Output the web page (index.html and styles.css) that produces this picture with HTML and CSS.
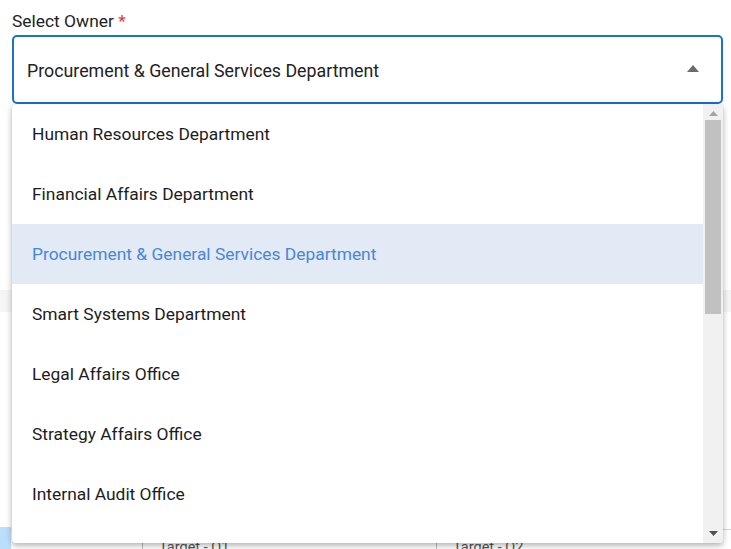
FILE: index.html
```html
<!DOCTYPE html>
<html>
<head>
<meta charset="utf-8">
<link rel="stylesheet" href="styles.css">
</head>
<body>
<div class="page">
  <div class="field">
    <div class="label">Select Owner <span class="req">*</span></div>
    <div class="select">
      <span class="value">Procurement &amp; General Services Department</span>
      <svg class="caret" width="12" height="7" viewBox="0 0 12 7"><path d="M0 7 L6 0 L12 7 Z" fill="#6b6b6b"/></svg>
    </div>
  </div>
  <div class="under">
    <div class="band"></div>
    <div class="table">
      <div class="rowline"></div>
      <div class="cells">
        <div class="blue"></div>
        <div class="cell first"></div>
        <div class="cell">Target - Q1</div>
        <div class="cell">Target - Q2</div>
      </div>
    </div>
  </div>

  <div class="menu">
    <ul class="list">
      <li class="item">Human Resources Department</li>
      <li class="item">Financial Affairs Department</li>
      <li class="item active">Procurement &amp; General Services Department</li>
      <li class="item">Smart Systems Department</li>
      <li class="item">Legal Affairs Office</li>
      <li class="item">Strategy Affairs Office</li>
      <li class="item">Internal Audit Office</li>
      <li class="item">Planning Office</li>
    </ul>
    <div class="scrollbar">
      <svg class="arrow" width="9" height="5" viewBox="0 0 9 5"><path d="M0 5 L4.5 0 L9 5 Z" fill="#a3a3a3"/></svg>
      <div class="track"><div class="thumb"></div></div>
      <svg class="arrow" width="9" height="5" viewBox="0 0 9 5"><path d="M0 0 L4.5 5 L9 0 Z" fill="#505050"/></svg>
    </div>
  </div>
</div>
</body>
</html>
```
FILE: styles.css
```css
html, body {
  margin: 0;
  padding: 0;
  background: #ffffff;
  font-family: Roboto, "Liberation Sans", sans-serif;
  color: #212121;
}
.page {
  position: relative;
  width: 731px;
  height: 549px;
  overflow: hidden;
}
.field {
  padding: 10px 8px 0 12px;
}
.label {
  font-size: 17.4px;
  line-height: 22px;
  color: #222;
  height: 25px;
}
.req {
  color: #e53935;
}
.select {
  box-sizing: border-box;
  height: 69px;
  border: 2px solid #1a73d0;
  border-radius: 5px;
  display: flex;
  align-items: center;
  justify-content: space-between;
  padding: 0 22px 0 13px;
}
.value {
  font-size: 17.8px;
  color: #222;
  padding-top: 1px;
}
.caret {
  margin-top: -3px;
}
.under {
  display: flex;
  flex-direction: column;
}
.band {
  margin-top: 186px;
  height: 22px;
  background: #f5f5f5;
}
.table {
  margin-top: 217px;
}
.rowline {
  height: 1px;
  background: #d6d6d6;
}
.cells {
  display: flex;
  height: 22px;
}
.blue {
  width: 11px;
  margin-top: -3px;
  background: #bbdefb;
}
.cell {
  width: 294px;
  border-left: 1px solid #bdbdbd;
  margin-top: 10px;
  padding-left: 16px;
  font-size: 14.5px;
  line-height: 16px;
  color: #555;
  box-sizing: border-box;
}
.cell.first {
  width: 131px;
  border-left: none;
}
.menu {
  position: absolute;
  left: 12px;
  top: 104px;
  width: 711px;
  height: 439px;
  background: #fff;
  border-radius: 4px;
  box-shadow: 0 3px 5px rgba(0,0,0,0.2), 0 1px 10px rgba(0,0,0,0.12), 0 0 1px rgba(0,0,0,0.15);
  display: flex;
  overflow: hidden;
}
.list {
  list-style: none;
  margin: 0;
  padding: 0;
  flex: 1;
  overflow: hidden;
}
.item {
  height: 60px;
  display: flex;
  align-items: center;
  padding-left: 20px;
  font-size: 17.4px;
  color: #1d1d1d;
}
.item.active {
  background: #e1eaf5;
  color: #4a86d6;
}
.scrollbar {
  width: 20px;
  background: #f1f1f1;
  display: flex;
  flex-direction: column;
  align-items: center;
}
.arrow {
  margin: 7px 0 4px;
}
.scrollbar .arrow:last-child {
  margin: 4px 0 7px;
}
.track {
  flex: 1;
  width: 100%;
  display: flex;
  flex-direction: column;
}
.thumb {
  margin: 0 2px;
  height: 194px;
  background: #c1c1c1;
}
```
